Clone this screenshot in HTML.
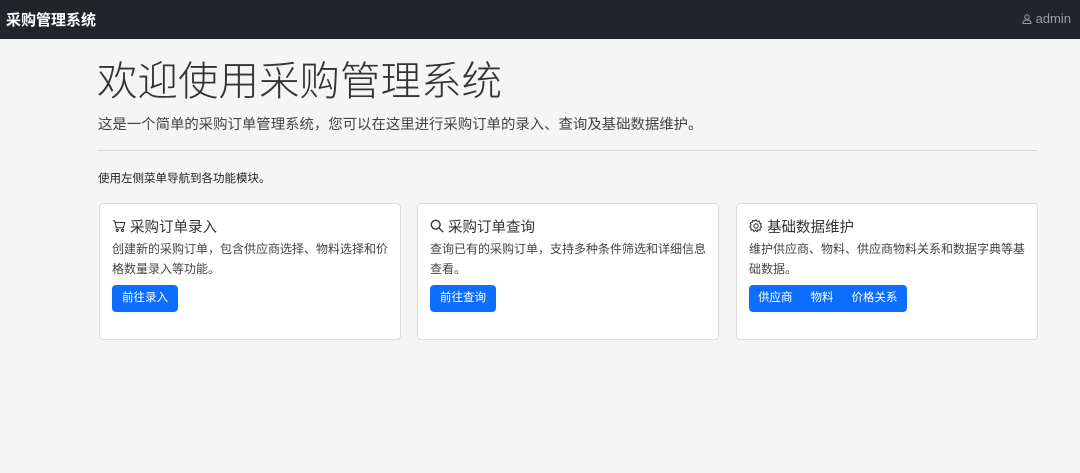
<!DOCTYPE html>
<html><head><meta charset="utf-8"><style>
*{box-sizing:border-box;margin:0;padding:0}
body{width:1080px;height:473px;overflow:hidden;background:#f5f5f5;font-family:"Liberation Sans","Noto Sans CJK SC",sans-serif;color:#212529}
.nav{height:39px;background:#212529;position:relative}
.brand{position:absolute;left:6px;top:9px;color:#fff;font-weight:bold;font-size:15px}
.user{position:absolute;right:9px;top:11px;color:#9a9da0;font-size:13px}
h1{position:absolute;left:97px;top:55px;font-size:40.5px;font-weight:300;color:#333;line-height:52px}
.sub{position:absolute;left:98px;top:113px;font-size:14.4px;color:#444}
.hr{position:absolute;left:98px;width:939px;top:150px;border-top:1px solid #d8d8d8}
.small{position:absolute;left:98px;top:170px;font-size:11.5px;color:#222}
.card{position:absolute;top:203px;width:302px;height:137px;background:#fff;border:1px solid #dcdcdc;border-radius:4px;padding:12px 12px}
.card h5{font-size:14.5px;font-weight:normal;color:#333;display:flex;align-items:center;gap:4px;height:20px}
.card p{font-size:12px;line-height:20px;color:#444;margin-top:3px;height:40px}
.btn{display:inline-block;margin-top:6px;background:#0d6efd;color:#fff;font-size:11.5px;border-radius:4px;height:27px;line-height:27px;padding:0 10px}
.grp span{display:inline-block;padding:0 9px}
</style></head><body>
<div class="nav"><div class="brand">采购管理系统</div><div class="user"><svg width="10" height="10" viewBox="0 0 10 10" style="vertical-align:-1px"><circle cx="5" cy="3" r="2.2" fill="none" stroke="#9a9da0"/><path d="M1 9.5c0-2.5 1.8-3.5 4-3.5s4 1 4 3.5z" fill="none" stroke="#9a9da0"/></svg> admin</div></div>
<h1>欢迎使用采购管理系统</h1>
<div class="sub">这是一个简单的采购订单管理系统，您可以在这里进行采购订单的录入、查询及基础数据维护。</div>
<div class="hr"></div>
<div class="small">使用左侧菜单导航到各功能模块。</div>
<div class="card" style="left:99px"><h5><svg width="14" height="14" viewBox="0 0 16 16" fill="none" stroke="#333" stroke-width="1.2"><path d="M1 2h2l2 8h8l1.5-6H4"/><circle cx="6" cy="13" r="1.2"/><circle cx="12" cy="13" r="1.2"/></svg>采购订单录入</h5><p>创建新的采购订单，包含供应商选择、物料选择和价格数量录入等功能。</p><span class="btn">前往录入</span></div>
<div class="card" style="left:417px"><h5><svg width="14" height="14" viewBox="0 0 16 16" fill="none" stroke="#333" stroke-width="1.6"><circle cx="6.5" cy="6.5" r="5"/><path d="M10.5 10.5L15 15"/></svg>采购订单查询</h5><p>查询已有的采购订单，支持多种条件筛选和详细信息查看。</p><span class="btn">前往查询</span></div>
<div class="card" style="left:736px"><h5><svg width="14" height="14" viewBox="0 0 16 16" fill="none" stroke="#333" stroke-width="1.2"><circle cx="8" cy="8" r="2.5"/><path d="M8 1l1.3 1.8 2.2-.6.4 2.2 2.1.9-.9 2.1 1.4 1.7-1.9 1.2.1 2.300-2.3-.2-1.2 2-1.7-1.5-1.7 1.5-1.2-2-2.3.2.1-2.3L1 8.6l1.4-1.7-.9-2.1 2.1-.9.4-2.2 2.2.6z"/></svg>基础数据维护</h5><p>维护供应商、物料、供应商物料关系和数据字典等基础数据。</p><span class="btn grp" style="padding:0"><span>供应商</span><span>物料</span><span>价格关系</span></span></div>
</body></html>
